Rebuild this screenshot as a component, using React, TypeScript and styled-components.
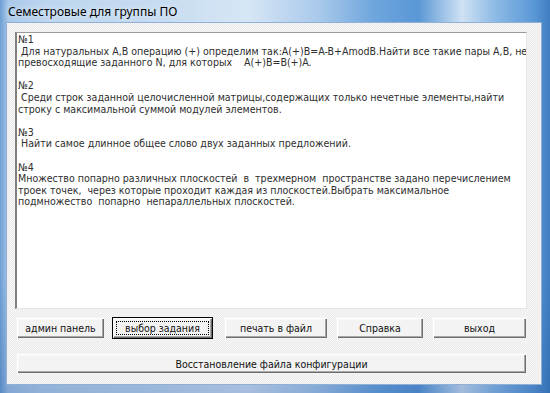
import React from "react";
import styled, { createGlobalStyle } from "styled-components";

const Global = createGlobalStyle`
  html, body { margin: 0; padding: 0; }
  body { width: 550px; height: 393px; overflow: hidden; background: #fff; }
`;

const Frame = styled.div`
  width: 550px;
  height: 393px;
  box-sizing: border-box;
  display: flex;
  flex-direction: column;
  padding: 0 8px 8px 6px;
  background:
    linear-gradient(180deg, rgba(255,255,255,0) 0%, rgba(255,255,255,0) 70%, rgba(20,70,150,0.25) 100%),
    linear-gradient(90deg, #6e9fd3 0%, #a8c8ea 1.5%, #bcd5ee 8%, #c7dcf1 30%, #d7e6f5 45%, #a9c9eb 58%, #6ea6dd 68%, #5a97d6 76%, #cfe2f3 84%, #8dbbe6 90%, #5b98d6 97%, #3f7dc0 100%);
  font-family: "DejaVu Sans Condensed", "DejaVu Sans", sans-serif;
`;

const TitleBar = styled.div`
  height: 22px;
  display: flex;
  align-items: center;
  padding-left: 2px;
  font-family: "Noto Sans", "Open Sans", sans-serif;
  font-size: 12px;
  color: #000;
  text-shadow: 0 0 6px rgba(255,255,255,0.9);
`;

const Client = styled.div`
  flex: 1;
  box-sizing: border-box;
  border: 1px solid #8fb0d4;
  background-color: #f1f1f1;
  background-image: conic-gradient(#ebebeb 25%, #f7f7f7 0 50%, #ebebeb 0 75%, #f7f7f7 0);
  background-size: 2px 2px;
  padding: 9px 14px 10px 8px;
  display: flex;
  flex-direction: column;
`;

const Memo = styled.div`
  height: 277px;
  box-sizing: border-box;
  background: #fff;
  border-top: 1px solid #9a9a9a;
  border-left: 2px solid #808080;
  border-right: 1px solid #e4e4e4;
  border-bottom: 1px solid #e4e4e4;
  padding: 1px 1px 0 1px;
  font-size: 10.55px;
  line-height: 11.6px;
  color: #2e2e2e;
  overflow: hidden;
`;

const Line = styled.div`
  white-space: pre;
  height: 11.6px;
`;

const ButtonRow = styled.div`
  display: flex;
  margin-top: 8px;
  padding-left: 1px;
`;

const Button = styled.div<{ $w: number; $ml?: number; $focused?: boolean }>`
  position: relative;
  box-sizing: border-box;
  width: ${(p) => p.$w}px;
  margin-left: ${(p) => p.$ml ?? 0}px;
  height: 22px;
  display: flex;
  align-items: center;
  justify-content: center;
  font-size: 10.5px;
  color: #111;
  background: #f3f3f3;
  border: 1px solid ${(p) => (p.$focused ? "#000" : "transparent")};
  box-shadow: inset 1px 1px #ffffff, inset -1px -1px #6d6d6d, inset -2px -2px #a8a8a8, inset 2px 2px #f7f7f7;
  &::after {
    content: "";
    display: ${(p) => (p.$focused ? "block" : "none")};
    position: absolute;
    inset: 3px;
    border: 1px dotted #000;
  }
`;

const WideButton = styled(Button)`
  height: 21px;
  margin-top: 14px;
  margin-left: 1px;
`;

const lines: string[] = [
  "№1",
  " Для натуральных A,B операцию (+) определим так:A(+)B=A-B+AmodB.Найти все такие пары A,B, не",
  "превосходящие заданного N, для которых    A(+)B=B(+)A.",
  "",
  "№2",
  " Среди строк заданной целочисленной матрицы,содержащих только нечетные элементы,найти",
  "строку с максимальной суммой модулей элементов.",
  "",
  "№3",
  " Найти самое длинное общее слово двух заданных предложений.",
  "",
  "№4",
  "Множество попарно различных плоскостей  в  трехмерном  пространстве задано перечислением",
  "троек точек,  через которые проходит каждая из плоскостей.Выбрать максимальное",
  "подмножество  попарно  непараллельных плоскостей.",
];

export default function App() {
  return (
    <>
      <Global />
      <Frame>
        <TitleBar>Семестровые для группы ПО</TitleBar>
        <Client>
          <Memo>
            {lines.map((l, i) => (
              <Line key={i}>{l}</Line>
            ))}
          </Memo>
          <ButtonRow>
            <Button $w={89}>админ панель</Button>
            <Button $w={101} $ml={7} $focused>
              выбор задания
            </Button>
            <Button $w={104} $ml={11}>печать в файл</Button>
            <Button $w={88} $ml={8}>Справка</Button>
            <Button $w={95} $ml={8}>выход</Button>
          </ButtonRow>
          <WideButton as="div" $w={511}>
            Восстановление файла конфигурации
          </WideButton>
        </Client>
      </Frame>
    </>
  );
}
